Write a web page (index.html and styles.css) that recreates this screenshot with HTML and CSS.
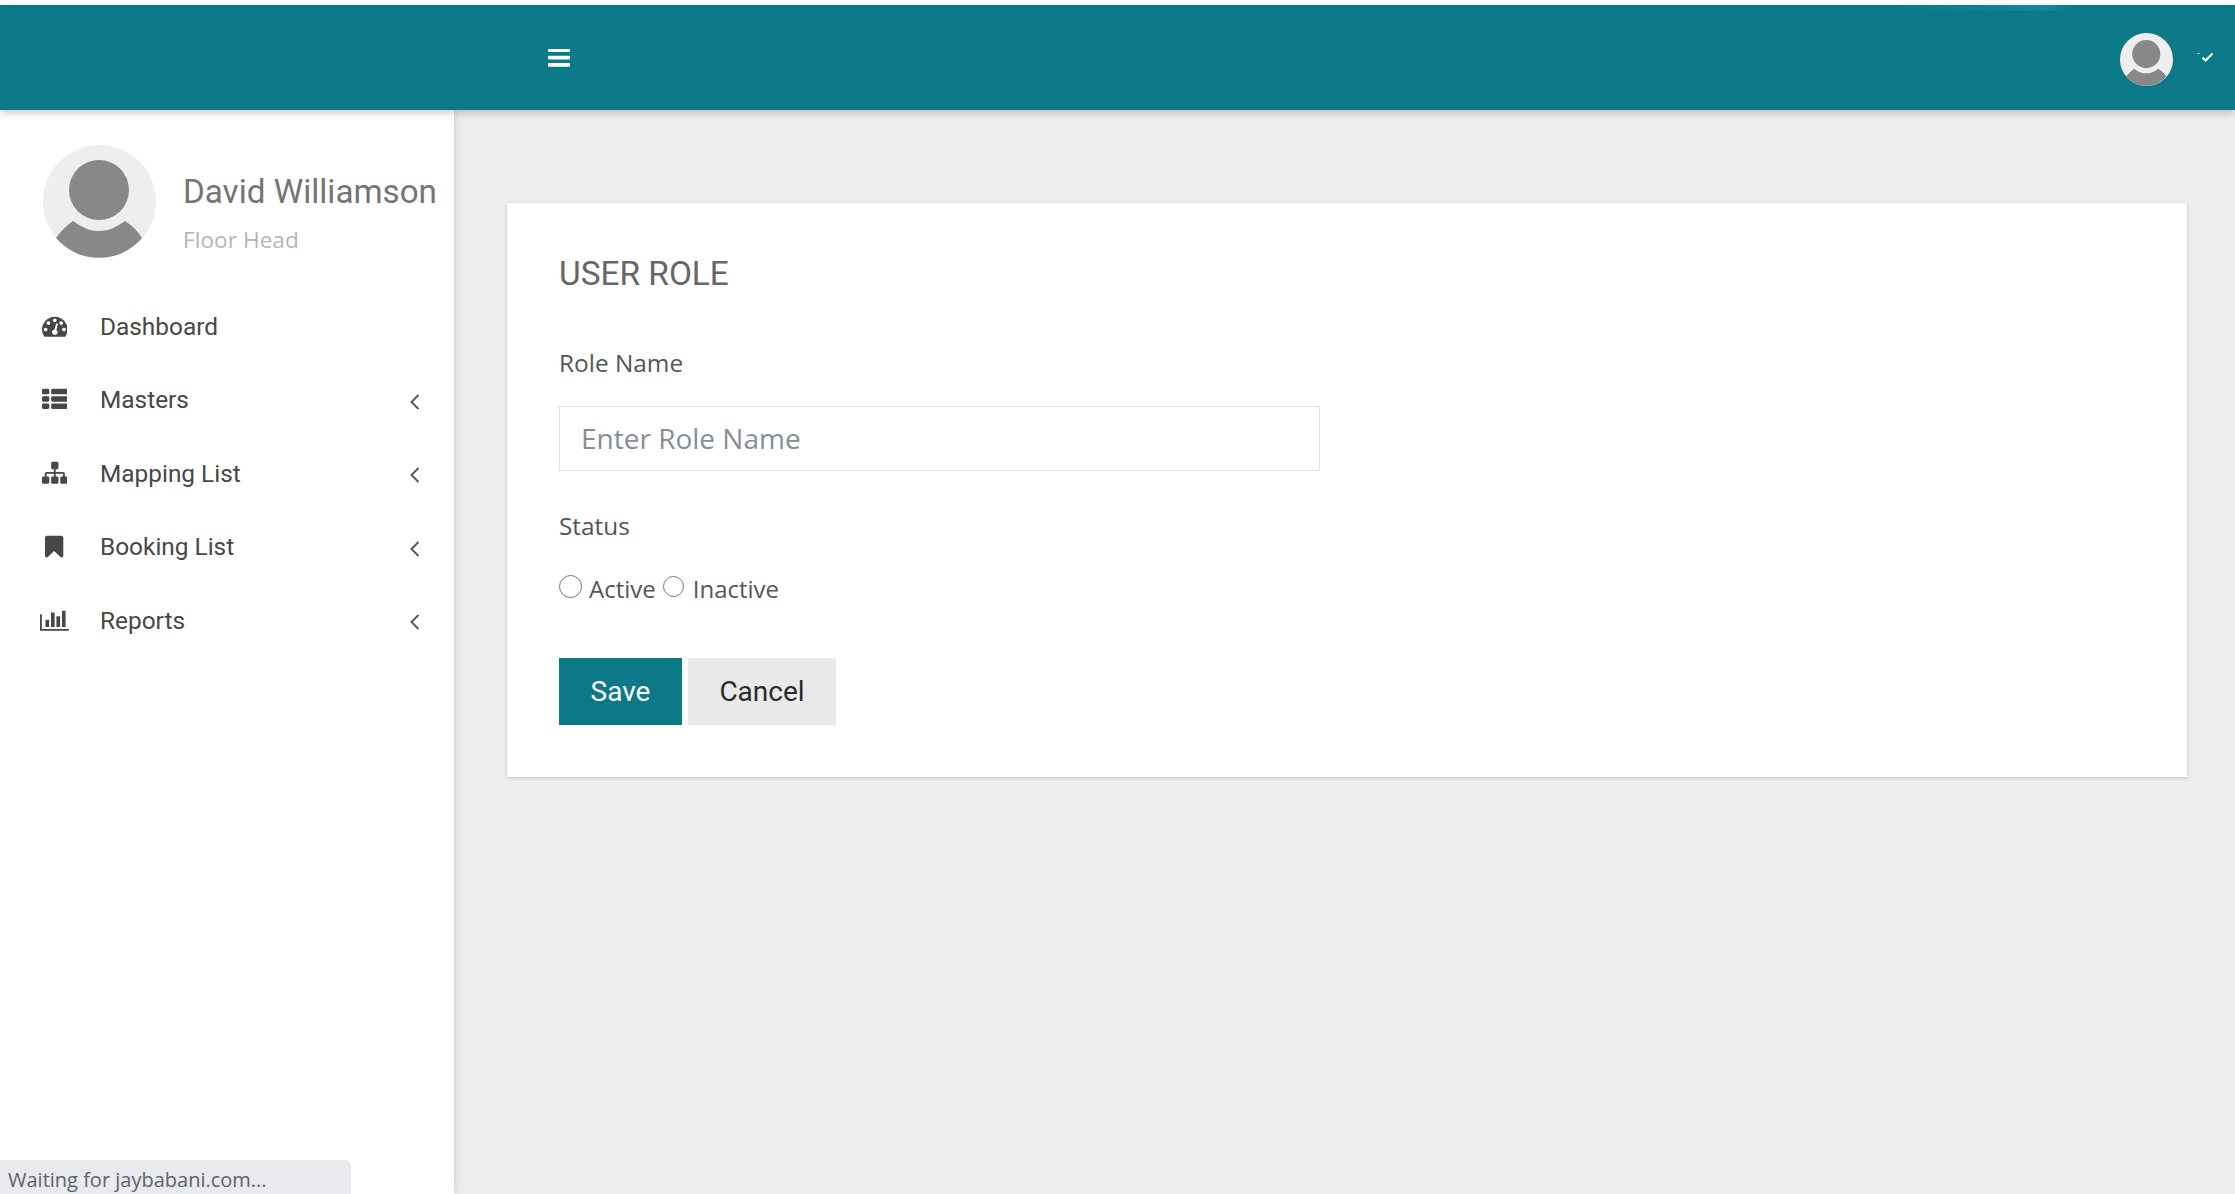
FILE: index.html
```html
<!DOCTYPE html>
<html lang="en">
  <head>
    <meta charset="UTF-8" />
    <meta name="viewport" content="width=device-width, initial-scale=1.0" />
    <title>User Role</title>
    <link rel="stylesheet" href="styles.css">
  </head>
  <body>
    <svg class="defs" width="0" height="0">
      <symbol id="avatar" viewBox="0 0 113 113">
        <circle cx="56.5" cy="56.5" r="56.5" fill="#eeeeee" />
        <circle cx="56" cy="45" r="30" fill="#888888" />
        <path d="M30 76 Q56 96 82 76 Q93 83 99 93 A56.5 56.5 0 0 1 13 93 Q20 83 30 76Z" fill="#888888" />
      </symbol>
    </svg>

    <header class="topbar">
      <span class="glint"></span>
      <svg class="menu-toggle" viewBox="128 320 1536 1216"><path d="M1664 1344v128q0 26-19 45t-45 19h-1408q-26 0-45-19t-19-45v-128q0-26 19-45t45-19h1408q26 0 45 19t19 45zm0-512v128q0 26-19 45t-45 19h-1408q-26 0-45-19t-19-45v-128q0-26 19-45t45-19h1408q26 0 45 19t19 45zm0-512v128q0 26-19 45t-45 19h-1408q-26 0-45-19t-19-45v-128q0-26 19-45t45-19h1408q26 0 45 19t19 45z"/></svg>
      <div class="topbar-user">
        <svg class="topbar-avatar"><use href="#avatar" /></svg>
        <svg class="topbar-caret" viewBox="0 0 16 10">
          <path d="M0.5 1.5h2" stroke="#cfe3e6" stroke-width="1" fill="none" />
          <path d="M5.500 5.500l3 3L15.500 1.500" stroke="#fff" stroke-width="2" fill="none" />
        </svg>
      </div>
    </header>

    <div class="layout">
      <aside class="sidebar">
        <div class="profile">
          <svg class="profile-avatar"><use href="#avatar" /></svg>
          <div class="profile-info">
            <div class="profile-name">David Williamson</div>
            <div class="profile-role">Floor Head</div>
          </div>
        </div>
        <ul class="nav">
          <li class="nav-item">
            <span class="nav-icon"><svg width="25.6" height="25.6" viewBox="0 0 1792 1792"><path d="M384 1152q0-53-37.500-90.500t-90.500-37.500-90.500 37.500-37.500 90.500 37.500 90.500 90.500 37.500 90.500-37.500 37.500-90.500zm192-448q0-53-37.500-90.500t-90.500-37.500-90.500 37.500-37.500 90.500 37.500 90.500 90.500 37.500 90.500-37.500 37.500-90.500zm428 481l101-382q6-26-7.500-48.500t-38.500-29.500-48 6.500-30 39.500l-101 382q-60 5-107 43.500t-63 98.500q-20 77 20 146t117 89 146-20 89-117q16-60-6-117t-72-91zm660-33q0-53-37.500-90.500t-90.500-37.500-90.500 37.500-37.500 90.500 37.500 90.500 90.500 37.500 90.500-37.500 37.500-90.500zm-640-640q0-53-37.500-90.500t-90.500-37.500-90.500 37.500-37.500 90.500 37.500 90.500 90.500 37.500 90.500-37.500 37.500-90.500zm448 192q0-53-37.500-90.500t-90.500-37.500-90.500 37.500-37.500 90.500 37.500 90.500 90.500 37.500 90.500-37.500 37.500-90.500zm320 448q0 261-141 483-19 29-54 29h-1402q-35 0-54-29-141-221-141-483 0-182 71-348t191-286 286-191 348-71 348 71 286 191 191 286 71 348z" fill-rule="evenodd"/></svg></span>
            <span class="nav-label">Dashboard</span>
          </li>
          <li class="nav-item">
            <span class="nav-icon"><svg width="25.6" height="25.6" viewBox="0 0 1792 1792"><path d="M512 1248v192q0 40-28 68t-68 28h-320q-40 0-68-28t-28-68v-192q0-40 28-68t68-28h320q40 0 68 28t28 68zm0-512v192q0 40-28 68t-68 28h-320q-40 0-68-28t-28-68v-192q0-40 28-68t68-28h320q40 0 68 28t28 68zm1280 512v192q0 40-28 68t-68 28h-960q-40 0-68-28t-28-68v-192q0-40 28-68t68-28h960q40 0 68 28t28 68zm-1280-1024v192q0 40-28 68t-68 28h-320q-40 0-68-28t-28-68v-192q0-40 28-68t68-28h320q40 0 68 28t28 68zm1280 512v192q0 40-28 68t-68 28h-960q-40 0-68-28t-28-68v-192q0-40 28-68t68-28h960q40 0 68 28t28 68zm0-512v192q0 40-28 68t-68 28h-960q-40 0-68-28t-28-68v-192q0-40 28-68t68-28h960q40 0 68 28t28 68z"/></svg></span>
            <span class="nav-label">Masters</span>
            <svg class="nav-arrow" viewBox="0 0 10 16"><path d="M8.500 1L1.500 8l7 7" /></svg>
          </li>
          <li class="nav-item">
            <span class="nav-icon"><svg width="25.6" height="25.6" viewBox="0 0 1792 1792"><path d="M1792 1248v320q0 40-28 68t-68 28h-320q-40 0-68-28t-28-68v-320q0-40 28-68t68-28h96v-192h-512v192h96q40 0 68 28t28 68v320q0 40-28 68t-68 28h-320q-40 0-68-28t-28-68v-320q0-40 28-68t68-28h96v-192h-512v192h96q40 0 68 28t28 68v320q0 40-28 68t-68 28h-320q-40 0-68-28t-28-68v-320q0-40 28-68t68-28h96v-192q0-52 38-90t90-38h512v-192h-96q-40 0-68-28t-28-68v-320q0-40 28-68t68-28h320q40 0 68 28t28 68v320q0 40-28 68t-68 28h-96v192h512q52 0 90 38t38 90v192h96q40 0 68 28t28 68z"/></svg></span>
            <span class="nav-label">Mapping List</span>
            <svg class="nav-arrow" viewBox="0 0 10 16"><path d="M8.500 1L1.500 8l7 7" /></svg>
          </li>
          <li class="nav-item">
            <span class="nav-icon"><svg width="18.300" height="25.6" viewBox="0 0 1280 1792"><path d="M1164 128q23 0 44 9 33 13 52.500 41t19.500 62v1289q0 34-19.500 62t-52.500 41q-19 8-44 8-48 0-83-32l-441-424-441 424q-36 33-83 33-23 0-44-9-33-13-52.500-41t-19.500-62v-1289q0-34 19.500-62t52.500-41q21-9 44-9h1048z"/></svg></span>
            <span class="nav-label">Booking List</span>
            <svg class="nav-arrow" viewBox="0 0 10 16"><path d="M8.500 1L1.500 8l7 7" /></svg>
          </li>
          <li class="nav-item">
            <span class="nav-icon"><svg width="29.250" height="25.6" viewBox="0 0 2048 1792"><path d="M640 896v512h-256v-512h256zm384-512v1024h-256v-1024h256zm1024 1152v128h-2048v-1152h128v1024h1920zm-640-896v768h-256v-768h256zm384-384v1152h-256v-1152h256z"/></svg></span>
            <span class="nav-label">Reports</span>
            <svg class="nav-arrow" viewBox="0 0 10 16"><path d="M8.500 1L1.500 8l7 7" /></svg>
          </li>
        </ul>
      </aside>

      <main class="content">
        <section class="card">
          <h2 class="card-title">USER ROLE</h2>
          <form>
            <label class="field-label" for="roleName">Role Name</label>
            <input class="field-input" type="text" id="roleName" placeholder="Enter Role Name" />
            <div class="field-label status-label">Status</div>
            <div class="radio-row">
              <input class="radio" type="radio" name="status" id="active" />
              <label for="active">Active</label>
              <input class="radio radio-small" type="radio" name="status" id="inactive" />
              <label for="inactive">Inactive</label>
            </div>
            <div class="actions">
              <button class="btn btn-save" type="button">Save</button>
              <button class="btn btn-cancel" type="button">Cancel</button>
            </div>
          </form>
        </section>
      </main>
    </div>

    <div class="status-bubble">Waiting for jaybabani.com...</div>
  </body>
</html>
```

FILE: styles.css
```css
* {
  box-sizing: border-box;
}
html, body {
  height: 100%;
}
body {
  margin: 0;
  padding-top: 5px;
  background-color: #fff;
  display: flex;
  flex-direction: column;
  overflow: hidden;
  font-family: Roboto, Arial, sans-serif;
}
.defs {
  position: absolute;
}

/* top bar */
.topbar {
  height: 105px;
  flex: none;
  background-color: #0b7987;
  display: flex;
  align-items: center;
  padding-left: 548px;
  position: relative;
  z-index: 3;
  box-shadow: 0 3px 8px rgba(0, 0, 0, 0.2);
}
.glint {
  position: absolute;
  left: 1900px;
  top: 0;
  width: 165px;
  height: 6px;
  background: linear-gradient(90deg, rgba(26, 133, 170, 0), #1a85aa 90%, rgba(26, 133, 170, 0.3));
  opacity: 0.8;
  border-radius: 0 0 8px 60px;
}
.menu-toggle {
  width: 22px;
  height: 18px;
  fill: #fff;
  margin-top: 1px;
}
.topbar-user {
  margin-left: auto;
  display: flex;
  align-items: center;
  padding-right: 22px;
}
.topbar-avatar {
  width: 53px;
  height: 53px;
  margin-top: 3px;
}
.topbar-caret {
  width: 16px;
  height: 10px;
  margin-left: 24px;
  margin-top: -2px;
}

/* sidebar */
.layout {
  flex: 1;
  display: flex;
  min-height: 0;
}
.sidebar {
  width: 454px;
  flex: none;
  background-color: #fff;
  position: relative;
  z-index: 2;
  box-shadow: 0 0 10px rgba(0, 0, 0, 0.18);
}
.profile {
  display: flex;
  align-items: center;
  height: 179px;
  padding: 35px 0 31px 43px;
}
.profile-avatar {
  width: 113px;
  height: 113px;
  flex: none;
}
.profile-info {
  margin-left: 27px;
  margin-top: 23px;
}
.profile-name {
  font-size: 33.2px;
  line-height: 40px;
  color: #757575;
  white-space: nowrap;
}
.profile-role {
  font-family: "Open Sans", sans-serif;
  font-size: 22.7px;
  line-height: 30px;
  margin-top: 13px;
  color: #b3b5ba;
}
.nav {
  list-style: none;
  margin: 0;
  padding: 0;
}
.nav-item {
  height: 73.5px;
  display: flex;
  align-items: center;
  padding-left: 39px;
  padding-top: 1px;
  color: #474747;
}
.nav-icon {
  width: 31px;
  height: 26px;
  display: flex;
  justify-content: center;
  align-items: center;
  flex: none;
}
.nav-icon svg {
  fill: #474747;
}
.nav-label {
  margin-left: 30px;
  font-size: 24.4px;
}
.nav-arrow {
  width: 10px;
  height: 16px;
  margin-left: auto;
  margin-right: 34px;
  margin-top: 4px;
  fill: none;
  stroke: #5a5a5a;
  stroke-width: 2;
}

/* content */
.content {
  flex: 1;
  background-color: #eeeeee;
  padding: 93px 48px 0 53px;
}
.card {
  background-color: #fff;
  height: 574px;
  padding: 51px 52px;
  box-shadow: 0 1px 4px rgba(0, 0, 0, 0.2);
}
.card-title {
  margin: 0;
  font-size: 33.4px;
  line-height: 40px;
  font-weight: 400;
  color: #666666;
}
.field-label {
  display: block;
  font-family: "Open Sans", sans-serif;
  font-size: 24.4px;
  line-height: 34px;
  color: #555555;
  margin-top: 52px;
}
.field-input {
  display: block;
  width: 761px;
  height: 65px;
  margin-top: 26px;
  padding: 0 21px 2px;
  border: 1px solid #e2e2e2;
  background-color: #fff;
  font-family: "Open Sans", sans-serif;
  font-size: 28px;
  outline: none;
}
.field-input::placeholder {
  color: #868e96;
  opacity: 1;
}
.status-label {
  margin-top: 38px;
}
.radio-row {
  display: flex;
  align-items: center;
  margin-top: 29px;
  font-family: "Open Sans", sans-serif;
  font-size: 24px;
  line-height: 34px;
  color: #555555;
}
.radio {
  width: 23px;
  height: 23px;
  margin: -5px 7px 0 0;
}
.radio-small {
  width: 21px;
  height: 21px;
  margin-left: 7px;
  margin-right: 9px;
}
.actions {
  display: flex;
  gap: 6px;
  margin-top: 52px;
}
.btn {
  height: 67px;
  border: 0;
  font-family: Roboto, sans-serif;
  font-size: 28px;
  padding: 0;
}
.btn-save {
  width: 123px;
  background-color: #0b7987;
  color: #fff;
}
.btn-cancel {
  width: 148px;
  background-color: #e9e9e9;
  color: #2b2b2b;
}

/* browser status bubble */
.status-bubble {
  position: fixed;
  left: 0;
  bottom: 0;
  width: 351px;
  height: 34px;
  padding-left: 8px;
  background-color: #e8eaed;
  border-top-right-radius: 6px;
  font-family: "Open Sans", sans-serif;
  font-size: 20px;
  line-height: 40px;
  color: #5f6368;
  z-index: 5;
}
```
